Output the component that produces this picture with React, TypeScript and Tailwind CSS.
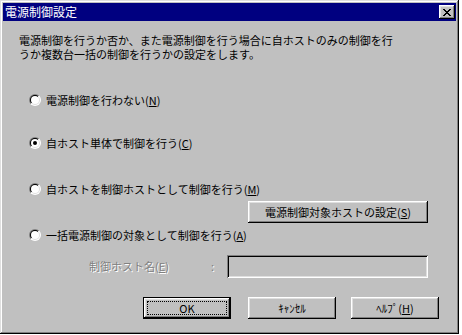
import React from 'react';

const bevel =
  'shadow-[inset_-1px_-1px_#000,inset_1px_1px_#fff,inset_-2px_-2px_#808080,inset_2px_2px_#dfdfdf]';

const U = ({ children }: { children: React.ReactNode }) => <span className="underline underline-offset-1">{children}</span>;

const RadioDot = ({ checked }: { checked?: boolean }) => (
  <span className="block w-3 h-3 rounded-full p-px bg-[linear-gradient(135deg,#808080_50%,#fff_50%)]">
    <span className="block w-full h-full rounded-full p-px bg-[linear-gradient(135deg,#000_50%,#dfdfdf_50%)]">
      <span className="flex w-full h-full rounded-full bg-white items-center justify-center">
        {checked && <span className="block w-1 h-1 rounded-full bg-black" />}
      </span>
    </span>
  </span>
);

const Radio = ({ checked, className, children }: { checked?: boolean; className: string; children: React.ReactNode }) => (
  <div className={`flex items-center h-4 ml-[26px] ${className}`}>
    <RadioDot checked={checked} />
    <span className="ml-[5px] leading-4">{children}</span>
  </div>
);

const CloseGlyph = () => (
  <svg width="8" height="7" viewBox="0 0 8 7" shapeRendering="crispEdges">
    <path
      d="M0 0h2v1h-2zM6 0h2v1h-2zM1 1h2v1h-2zM5 1h2v1h-2zM2 2h4v1h-4zM3 3h2v1h-2zM2 4h4v1h-4zM1 5h2v1h-2zM5 5h2v1h-2zM0 6h2v1h-2zM6 6h2v1h-2z"
      fill="#000"
    />
  </svg>
);

const Button = ({ className, children }: { className: string; children: React.ReactNode }) => (
  <button className={`flex items-center justify-center bg-[#c0c0c0] text-black leading-none ${bevel} ${className}`}>
    {children}
  </button>
);

export default function App() {
  return (
    <div className="w-[462px] h-[335px] bg-white font-['Noto_Sans_CJK_JP',sans-serif] text-[11px] text-black">
      <div className="w-[459px] h-[334px] p-[3px] bg-[#c0c0c0] shadow-[inset_-1px_-1px_#000,inset_1px_1px_#dfdfdf,inset_-2px_-2px_#808080,inset_2px_2px_#fff] flex flex-col">
        {/* title bar */}
        <div className="h-[18px] bg-[#000080] flex items-center justify-between pl-[2px] pr-[1px]">
          <span className="text-white text-[12px] leading-none">電源制御設定</span>
          <span className={`w-4 h-[14px] bg-[#c0c0c0] flex items-center justify-center ${bevel}`}>
            <CloseGlyph />
          </span>
        </div>

        <p className="mt-[12px] pl-4 leading-[14px]">
          電源制御を行うか否か、また電源制御を行う場合に自ホストのみの制御を行
          <br />
          うか複数台一括の制御を行うかの設定をします。
        </p>

        <Radio className="mt-[31px]">
          電源制御を行わない(<U>N</U>)
        </Radio>
        <Radio checked className="mt-[27px]">
          自ホスト単体で制御を行う(<U>C</U>)
        </Radio>
        <Radio className="mt-[30px]">
          自ホストを制御ホストとして制御を行う(<U>M</U>)
        </Radio>

        <Button className="mt-[4px] ml-[245px] w-[180px] h-[22px]">
          電源制御対象ホストの設定(<U>S</U>)
        </Button>

        <Radio className="mt-[4px]">
          一括電源制御の対象として制御を行う(<U>A</U>)
        </Radio>

        <div className="mt-[12px] ml-[86px] flex items-center h-[23px]">
          <span className="w-[122px] text-[#808080] [text-shadow:1px_1px_0_#fff]">
            制御ホスト名(<U>E</U>)
          </span>
          <span className="w-[16px] text-[#808080] [text-shadow:1px_1px_0_#fff]">:</span>
          <div className="w-[201px] h-[23px] bg-[#c0c0c0] shadow-[inset_1px_1px_#808080,inset_-1px_-1px_#fff,inset_2px_2px_#000,inset_-2px_-2px_#dfdfdf]" />
        </div>

        <div className="mt-[19px] ml-[140px] flex">
          <button className="relative w-[88px] h-[22px] border border-black bg-[#c0c0c0] flex items-center justify-center leading-none shadow-[inset_-1px_-1px_#000,inset_1px_1px_#fff,inset_-2px_-2px_#808080,inset_2px_2px_#dfdfdf]">
            <span className="absolute inset-[3px] border border-dotted border-black" />
            OK
          </button>
          <Button className="ml-[17px] w-[88px] h-[22px]">ｷｬﾝｾﾙ</Button>
          <Button className="ml-[15px] w-[88px] h-[22px]">
            ﾍﾙﾌﾟ(<U>H</U>)
          </Button>
        </div>
      </div>
    </div>
  );
}
